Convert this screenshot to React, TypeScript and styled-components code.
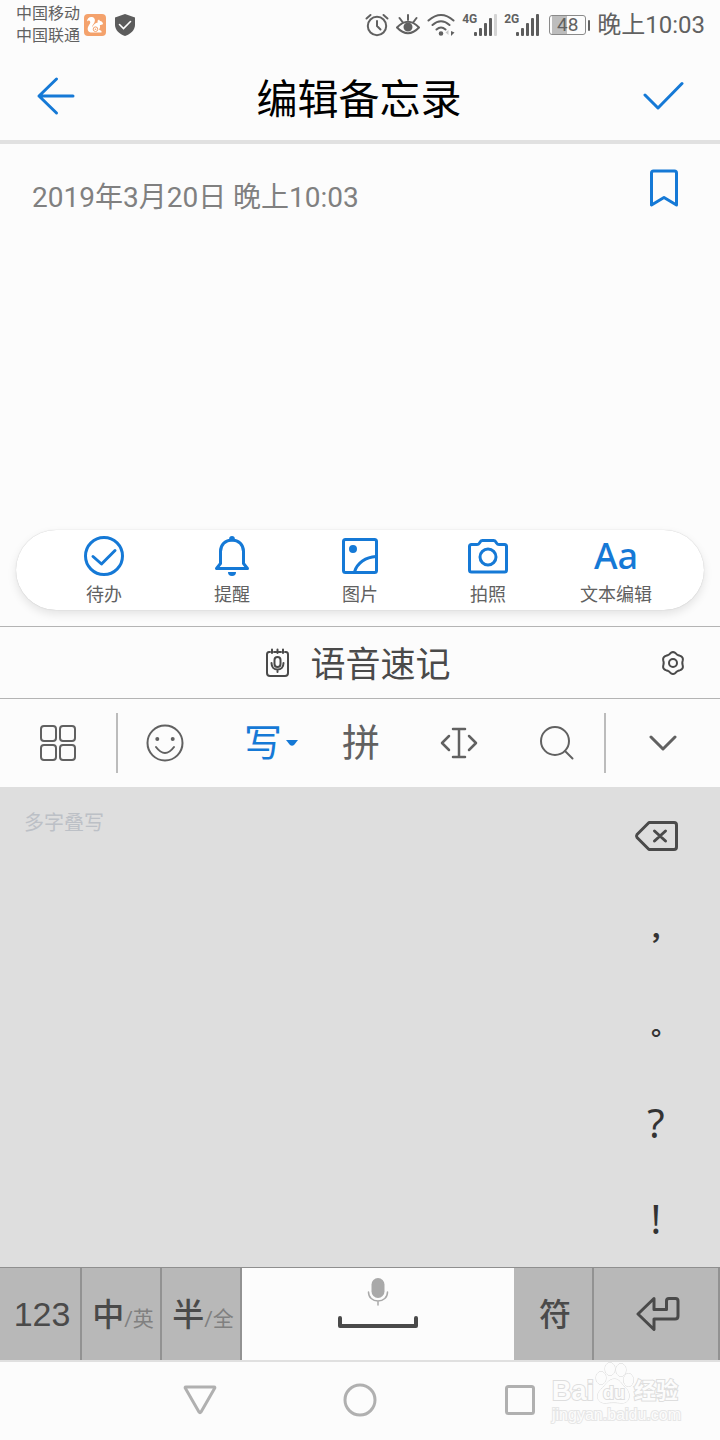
import React from "react";
import styled, { createGlobalStyle } from "styled-components";

const BLUE = "#1579d6";
const GREY = "#616161";
const DARK = "#4a4a4a";

const GlobalStyle = createGlobalStyle`
  *, *::before, *::after { box-sizing: border-box; }
  body {
    margin: 0;
    background: #fcfcfc;
    font-family: Roboto, "Noto Sans CJK SC", sans-serif;
    color: ${GREY};
  }
  button, textarea {
    font: inherit;
    color: inherit;
    border: 0;
    padding: 0;
    margin: 0;
    background: none;
  }
  button { cursor: pointer; }
  svg { display: block; flex: none; }
`;

const Screen = styled.div`
  display: flex;
  flex-direction: column;
  min-height: 100vh;
`;

/* ---------- status bar ---------- */

const StatusBar = styled.div`
  display: flex;
  align-items: center;
  justify-content: space-between;
  height: 50px;
  padding: 0 15px 0 16px;
`;

const StatusGroup = styled.div<{ $gap: number }>`
  display: flex;
  align-items: center;
  gap: ${(p) => p.$gap}px;
`;

const Carriers = styled.div`
  font-size: 16px;
  line-height: 22px;
  margin-right: -5px;
`;

const Signal = styled.div`
  display: flex;
  align-items: flex-start;
  height: 24px;
`;

const Network = styled.span`
  width: 12px;
  font: bold 12px/12px "Liberation Sans Narrow", Roboto, sans-serif;
`;

const Battery = styled.div`
  display: flex;
  align-items: center;
  gap: 2px;
  margin-left: 3px;

  &::after {
    content: "";
    width: 2px;
    height: 11px;
    border-radius: 1px;
    background: ${GREY};
  }
`;

const BatteryCell = styled.span`
  width: 37px;
  height: 20px;
  border: 1px solid #8a8a8a;
  border-radius: 3px;
  font-size: 19px;
  line-height: 18px;
  text-align: center;
  background: linear-gradient(to right, #bdbdbd 48%, transparent 48%) content-box;
  padding: 0 2px;
`;

const Clock = styled.span`
  font-size: 24px;
  line-height: 32px;
`;

/* ---------- header and note ---------- */

const Header = styled.header`
  display: flex;
  align-items: center;
  justify-content: space-between;
  height: 94px;
  padding: 2px 36px 0;
  border-bottom: 4px solid #e1e1e1;
`;

const Title = styled.h1`
  margin: 0;
  padding-top: 8px;
  font-size: 41px;
  line-height: 56px;
  font-weight: 400;
  color: #000;
`;

const Note = styled.main`
  display: flex;
  flex: 1;
  flex-direction: column;
  min-height: 482px;
  padding: 24px 16px 16px;
`;

const NoteMeta = styled.div`
  display: flex;
  align-items: flex-start;
  justify-content: space-between;
  padding: 0 24px 0 16px;
`;

const NoteDate = styled.time`
  padding-top: 12px;
  font-size: 28px;
  line-height: 36px;
  color: #808080;
`;

const NoteText = styled.textarea`
  flex: 1;
  padding: 16px;
  font-size: 28px;
  line-height: 40px;
  resize: none;
  outline: none;
`;

const Tools = styled.nav`
  display: flex;
  height: 80px;
  padding: 0 24px;
  border-radius: 40px;
  background: #fff;
  box-shadow: 0 0 1px rgba(0, 0, 0, 0.24), 0 4px 10px rgba(0, 0, 0, 0.1);
`;

const Tool = styled.button`
  display: flex;
  flex: 1;
  flex-direction: column;
  align-items: center;
  padding-top: 6px;
  font-size: 18px;
  line-height: 24px;
`;

const ToolIcon = styled.span`
  display: flex;
  align-items: center;
  justify-content: center;
  height: 40px;
  margin-bottom: 7px;
  font-family: "Noto Sans", sans-serif;
  font-size: 36px;
  line-height: 40px;
  font-weight: 500;
  color: ${BLUE};
`;

/* ---------- keyboard ---------- */

const VoiceBar = styled.div`
  display: grid;
  grid-template-columns: 1fr auto 1fr;
  align-items: center;
  height: 73px;
  padding: 0 34px;
  border: solid #b4b4b4;
  border-width: 1px 0;
  color: ${DARK};
`;

const VoiceButton = styled.button`
  grid-column: 2;
  display: flex;
  align-items: center;
  gap: 20px;
  padding-right: 4px;
  font-size: 35px;
  line-height: 48px;
`;

const VoiceLabel = styled.span`
  padding-top: 6px;
`;

const SettingsButton = styled.button`
  justify-self: end;
`;

const ModeBar = styled.div`
  display: grid;
  grid-template-columns: 116fr 2px 486fr 2px 114fr;
  align-items: center;
  height: 88px;
`;

const Modes = styled.div`
  display: grid;
  grid-template-columns: repeat(5, 1fr);
  margin: 0 -2px;
`;

const Mode = styled.button<{ $active?: boolean }>`
  display: flex;
  align-items: center;
  justify-content: center;
  height: 60px;
  gap: 4px;
  font-size: 38px;
  color: ${(p) => (p.$active ? BLUE : GREY)};
  padding-left: ${(p) => (p.$active ? 16 : 0)}px;
`;

const ModeLabel = styled.span`
  line-height: 48px;
`;

const Divider = styled.span`
  height: 60px;
  background: #bcbcbc;
`;

const Pad = styled.div`
  display: flex;
  justify-content: space-between;
  height: 480px;
  background: #dedede;
`;

const PadHint = styled.span`
  padding: 21px 24px;
  font-size: 20px;
  line-height: 30px;
  color: #bcc0c6;
`;

const SideKeys = styled.div`
  display: grid;
  grid-template-rows: repeat(5, 1fr);
  width: 128px;
`;

const SideKey = styled.button<{ $mark?: boolean }>`
  display: flex;
  align-items: center;
  justify-content: center;
  padding-top: ${(p) => (p.$mark ? 10 : 0)}px;
  font-family: ${(p) => (p.$mark ? '"Noto Sans CJK TC"' : '"Noto Sans"')}, sans-serif;
  font-size: ${(p) => (p.$mark ? 26 : 40)}px;
  font-weight: ${(p) => (p.$mark ? 700 : 400)};
  line-height: 48px;
  color: #333;
`;

const KeyRow = styled.div`
  display: grid;
  grid-template-columns: 82fr 80fr 80fr 272fr 80fr 126fr;
  height: 93px;
  border-top: 1px solid #8f8f8f;
`;

const Key = styled.button<{ $digits?: boolean }>`
  display: flex;
  align-items: center;
  justify-content: center;
  padding-left: 4px;
  border-right: 2px solid #929292;
  background: #b8b8b8;
  color: ${DARK};
  font-family: ${(p) => (p.$digits ? '"Liberation Sans"' : 'Roboto, "Noto Sans CJK SC"')}, sans-serif;
  font-size: ${(p) => (p.$digits ? 34 : 32)}px;
  font-weight: ${(p) => (p.$digits ? 400 : 500)};
`;

const KeyLabel = styled.span`
  padding-bottom: 4px;
  white-space: nowrap;
`;

const SpaceKey = styled.button`
  display: flex;
  flex-direction: column;
  align-items: center;
  padding-top: 9px;
  gap: 9px;
`;

const KeyAlt = styled.small`
  font-size: 21px;
  font-weight: 400;
  color: #808080;
`;

/* ---------- system navigation ---------- */

const SystemNav = styled.nav`
  position: relative;
  display: flex;
  height: 80px;
  padding: 0 120px 2px;
  border-top: 2px solid #e0e0e0;
`;

const NavButton = styled.button`
  display: flex;
  flex: 1;
  align-items: center;
  justify-content: center;
`;

const Watermark = styled.div`
  position: absolute;
  top: 0;
  right: 40px;
  width: 128px;
  color: #fcfcfc;
  -webkit-text-stroke: 2px #dedede;
  paint-order: stroke fill;
  font-family: "Liberation Sans", "Noto Sans CJK SC", sans-serif;
`;

const WatermarkName = styled.div`
  display: flex;
  align-items: flex-end;
  height: 43px;
  font-size: 27px;
  line-height: 28px;
  font-weight: 700;
`;

const Paw = styled.span`
  position: relative;
  width: 40px;
  height: 43px;
`;

const PawText = styled.span`
  position: absolute;
  left: 9px;
  bottom: 2px;
  font-size: 18px;
  line-height: 20px;
`;

const WatermarkChinese = styled.span`
  font-size: 22px;
  line-height: 28px;
`;

const WatermarkUrl = styled.div`
  font-size: 16px;
  line-height: 20px;
  font-weight: 400;
  -webkit-text-stroke-color: #e6e6e6;
`;

/* ---------- icons ---------- */

type IconProps = {
  w: number;
  h: number;
  stroke?: number;
  color?: string;
  children: React.ReactNode;
};

const Icon = ({ w, h, stroke = 2, color = "currentColor", children }: IconProps) => (
  <svg
    width={w}
    height={h}
    viewBox={`0 0 ${w} ${h}`}
    fill="none"
    stroke={color}
    strokeWidth={stroke}
    strokeLinecap="round"
    strokeLinejoin="round"
    aria-hidden="true"
  >
    {children}
  </svg>
);

const SquirrelIcon = () => (
  <svg width="22" height="22" viewBox="0 0 22 22" aria-hidden="true">
    <rect width="22" height="22" rx="4" fill="#f4a26c" />
    <path
      fill="#fff"
      d="M3 7.500C3 4.500 5.500 2.500 8 3c3 .6 3.600 3.500 2.300 5.700C9.300 10.300 8 11.500 8.300 13.200c1-2.700 3.200-4.200 5.400-4.700l-.2-1.700 1.500-1.300 1 1.500c1.800.2 3 1.500 3 3-.9.900-2 1-3.200 1.100.6 1.700.2 3.200-.8 4.400l2.500 1.500v1.500H6.500C3.500 17.500 3 14.500 4.500 12 5.500 10.300 6.600 9 6.200 7.700 5.700 6.300 4 6.300 3 7.500Z"
    />
    <circle cx="11.500" cy="15.200" r="2.300" fill="none" stroke="#f4a26c" />
    <circle cx="11.500" cy="15.200" r=".8" fill="#f4a26c" />
  </svg>
);

const ShieldIcon = () => (
  <svg width="20" height="22" viewBox="0 0 20 22" aria-hidden="true">
    <path d="M10 0 20 3.500V11c0 5-4.500 9-10 11C4.500 20 0 16 0 11V3.500Z" fill="#5c5c5c" />
    <path d="m4.500 10.500 4 4 7-7" fill="none" stroke="#fff" strokeWidth="1.600" strokeLinecap="round" />
  </svg>
);

const AlarmIcon = () => (
  <Icon w={24} h={24}>
    <circle cx="12" cy="13" r="9.200" />
    <path d="M12 8v5l3.500 3.500M1.500 5.500l4-3.500M22.500 5.500l-4-3.500" />
  </Icon>
);

const EyeIcon = () => (
  <Icon w={24} h={24}>
    <path d="M1 14.500Q12 3 23 14.500 12 26 1 14.500ZM12 2v5M3.500 5l3 4M20.500 5l-3 4" />
    <circle cx="12" cy="14" r="3.500" fill="currentColor" />
  </Icon>
);

const WifiIcon = () => (
  <Icon w={28} h={24} stroke={2}>
    <path d="M1.500 7.500Q14-3.500 26.500 7.500M5.500 12Q14 4.500 22.500 12M9.500 16.500Q14 12.500 18.500 16.500" />
    <circle cx="14" cy="20.500" r="1.300" fill="currentColor" />
    <path d="M21.500 17v5l-3-2.500Z" fill="#c8c8c8" stroke="none" />
    <path d="M24 18v5l3.500-3.500Z" fill="currentColor" stroke="none" />
  </Icon>
);

const Bars = ({ level }: { level: number }) => (
  <svg width="23" height="24" viewBox="0 0 23 24" aria-hidden="true">
    {[4, 8, 13, 18, 22].map((height, i) => (
      <rect
        key={height}
        x={i * 5}
        y={23 - height}
        width="3"
        height={height}
        rx="1"
        fill={i < level ? "#5c5c5c" : "#d4d4d4"}
      />
    ))}
  </svg>
);

const TodoIcon = () => (
  <Icon w={40} h={40} stroke={3}>
    <circle cx="20" cy="20" r="18.500" />
    <path d="m9 20.500 8.500 7.500L31 14.500" />
  </Icon>
);

const BellIcon = () => (
  <Icon w={36} h={40} stroke={3}>
    <path d="M2.500 32.500h31l-4-5V15.500c0-7-5-11.500-11.500-11.500S6.500 8.500 6.500 15.500v12Z" />
    <circle cx="18" cy="2.800" r="1.300" fill="currentColor" />
    <path d="M14 36h8a4 4 0 0 1-8 0Z" fill="currentColor" stroke="none" />
  </Icon>
);

const PictureIcon = () => (
  <Icon w={38} h={40} stroke={3}>
    <rect x="2.500" y="3.500" width="33" height="33" rx="2" />
    <circle cx="12" cy="13" r="2.500" fill="currentColor" />
    <path d="M13.500 36C16 27 25 21 35 20.500" />
  </Icon>
);

const CameraIcon = () => (
  <Icon w={42} h={40} stroke={3}>
    <path d="M4.500 8.500H10q1.500 0 2.500-1.500l1-1.500q.5-1 2-1h11q1.500 0 2 1l1 1.500q1 1.500 2.500 1.500h5.500q2 0 2 2V34q0 2-2 2h-33q-2 0-2-2V10.500q0-2 2-2Z" />
    <circle cx="21" cy="21" r="8" />
  </Icon>
);

const VoiceNoteIcon = () => (
  <Icon w={25} h={30}>
    <path d="M5 4H4Q2 4 2 6.500V25q0 3 3 3h15q3 0 3-3V6.500Q23 4 21 4h-1M7 1.500V5M12.500 1.500V5M18 1.500V5M9 4h2M14 4h2" />
    <rect x="9.500" y="9" width="6" height="10" rx="3" />
    <path d="M6.500 15c0 4 2.500 6.500 6 6.500s6-2.500 6-6.500M12.500 21.500V24" />
  </Icon>
);

const gearOutline = () => {
  const step = Math.PI / 36;
  const points = Array.from({ length: 72 }, (_, i) => {
    const angle = i * step;
    const radius = 10.1 + 0.8 * Math.cos(6 * angle);
    return `${(13 + radius * Math.sin(angle)).toFixed(2)} ${(13 - radius * Math.cos(angle)).toFixed(2)}`;
  });
  return `M${points.join("L")}Z`;
};

const GearIcon = () => (
  <Icon w={26} h={26}>
    <path d={gearOutline()} />
    <circle cx="13" cy="13" r="4" />
  </Icon>
);

const GridIcon = () => (
  <Icon w={38} h={38} stroke={2}>
    {[2, 21].map((y) =>
      [2, 21].map((x) => <rect key={`${x}-${y}`} x={x} y={y} width="15" height="15" rx="3" />)
    )}
  </Icon>
);

const SmileIcon = () => (
  <Icon w={38} h={38}>
    <circle cx="19" cy="19" r="17.500" />
    <path d="M10 23q9 12 18 0" />
    <circle cx="11.300" cy="15" r="1" fill="currentColor" />
    <circle cx="26.700" cy="15" r="1" fill="currentColor" />
  </Icon>
);

const CaretIcon = () => (
  <svg width="12" height="6" viewBox="0 0 12 6" aria-hidden="true">
    <path d="M0 0h12L8 5q-2 1.500-4 0Z" fill={BLUE} />
  </svg>
);

const CursorIcon = () => (
  <Icon w={38} h={34}>
    <path d="M9 10l-7 7 7 7M29 10l7 7-7 7" strokeWidth="2.500" />
    <path d="M13 3h12M13 31h12M19 3v28" strokeWidth="2.500" />
  </Icon>
);

const SearchIcon = () => (
  <Icon w={36} h={36}>
    <circle cx="16" cy="16" r="14" />
    <path d="m26 26 7.500 7.500" />
  </Icon>
);

const ChevronIcon = () => (
  <Icon w={28} h={16} stroke={3}>
    <path d="m2 2 12 12L26 2" />
  </Icon>
);

const BackspaceIcon = () => (
  <Icon w={44} h={32} stroke={3} color={DARK}>
    <path d="M15 3.500h25q2.500 0 2.500 2.500v22q0 2.500-2.500 2.500H15L3 18.500q-1-1.500 0-3ZM20.500 12l11 10M31.500 12l-11 10" />
  </Icon>
);

const EnterIcon = () => (
  <Icon w={44} h={34} stroke={3}>
    <path d="M18 1.500 2 17l16 15.500V22h21q3 0 3-3V4q0-2.500-2.500-2.500h-6.500Q30.500 1.500 30.500 4v8.500H18Z" />
  </Icon>
);

const SpaceIcon = () => (
  <Icon w={80} h={12} stroke={4} color={DARK}>
    <path d="M2 2v8h76V2" />
  </Icon>
);

const MicIcon = () => (
  <Icon w={22} h={30} color="#a9a9a9">
    <rect x="4.500" y="1" width="13" height="20" rx="6.500" fill="#a9a9a9" stroke="none" />
    <path d="M1.500 15c0 5.500 4 9 9.500 9s9.500-3.500 9.500-9M11 24v4" strokeWidth="1.500" />
  </Icon>
);

const TOOLS = [
  { label: "待办", icon: <TodoIcon /> },
  { label: "提醒", icon: <BellIcon /> },
  { label: "图片", icon: <PictureIcon /> },
  { label: "拍照", icon: <CameraIcon /> },
  { label: "文本编辑", icon: "Aa" },
];

export default function App() {
  return (
    <Screen lang="zh-CN">
      <GlobalStyle />
      <StatusBar>
        <StatusGroup $gap={9}>
          <Carriers>
            中国移动
            <br />
            中国联通
          </Carriers>
          <SquirrelIcon />
          <ShieldIcon />
        </StatusGroup>
        <StatusGroup $gap={7}>
          <AlarmIcon />
          <EyeIcon />
          <WifiIcon />
          <Signal>
            <Network>4G</Network>
            <Bars level={4} />
          </Signal>
          <Signal>
            <Network>2G</Network>
            <Bars level={5} />
          </Signal>
          <Battery>
            <BatteryCell>48</BatteryCell>
          </Battery>
          <Clock>晚上10:03</Clock>
        </StatusGroup>
      </StatusBar>

      <Header>
        <button aria-label="返回">
          <Icon w={40} h={40} stroke={3} color={BLUE}>
            <path d="M37 20H3M20.500 3 3 20l17.500 17" />
          </Icon>
        </button>
        <Title>编辑备忘录</Title>
        <button aria-label="完成">
          <Icon w={42} h={30} stroke={3} color={BLUE}>
            <path d="m3 14 13 13L40 2.500" />
          </Icon>
        </button>
      </Header>

      <Note>
        <NoteMeta>
          <NoteDate dateTime="2019-03-20T22:03">2019年3月20日 晚上10:03</NoteDate>
          <button aria-label="收藏">
            <Icon w={32} h={40} stroke={3} color={BLUE}>
              <path d="M3.500 37V5q0-2 2-2h21q2 0 2 2v32L16 29.500Z" />
            </Icon>
          </button>
        </NoteMeta>
        <NoteText aria-label="备忘录内容" />
        <Tools>
          {TOOLS.map((tool) => (
            <Tool key={tool.label}>
              <ToolIcon>{tool.icon}</ToolIcon>
              {tool.label}
            </Tool>
          ))}
        </Tools>
      </Note>

      <VoiceBar>
        <VoiceButton>
          <VoiceNoteIcon />
          <VoiceLabel>语音速记</VoiceLabel>
        </VoiceButton>
        <SettingsButton aria-label="设置">
          <GearIcon />
        </SettingsButton>
      </VoiceBar>

      <ModeBar>
        <Mode aria-label="菜单">
          <GridIcon />
        </Mode>
        <Divider />
        <Modes>
          <Mode aria-label="表情">
            <SmileIcon />
          </Mode>
          <Mode $active>
            <ModeLabel>写</ModeLabel>
            <CaretIcon />
          </Mode>
          <Mode>
            <ModeLabel>拼</ModeLabel>
          </Mode>
          <Mode aria-label="光标">
            <CursorIcon />
          </Mode>
          <Mode aria-label="搜索">
            <SearchIcon />
          </Mode>
        </Modes>
        <Divider />
        <Mode aria-label="收起">
          <ChevronIcon />
        </Mode>
      </ModeBar>

      <Pad>
        <PadHint>多字叠写</PadHint>
        <SideKeys lang="zh-TW">
          <SideKey aria-label="删除">
            <BackspaceIcon />
          </SideKey>
          <SideKey $mark>，</SideKey>
          <SideKey $mark>。</SideKey>
          <SideKey>?</SideKey>
          <SideKey>!</SideKey>
        </SideKeys>
      </Pad>

      <KeyRow>
        <Key $digits>123</Key>
        <Key>
          <KeyLabel>
            中<KeyAlt>/英</KeyAlt>
          </KeyLabel>
        </Key>
        <Key>
          <KeyLabel>
            半<KeyAlt>/全</KeyAlt>
          </KeyLabel>
        </Key>
        <SpaceKey aria-label="空格">
          <MicIcon />
          <SpaceIcon />
        </SpaceKey>
        <Key>
          <KeyLabel>符</KeyLabel>
        </Key>
        <Key aria-label="换行">
          <EnterIcon />
        </Key>
      </KeyRow>

      <SystemNav>
        <NavButton aria-label="后退">
          <Icon w={34} h={30} stroke={3} color="#b0b0b0">
            <path d="M3 2h28q1.500 0 .500 1.500L18 27q-1 1.500-2 0L2.500 3.500Q1.500 2 3 2Z" />
          </Icon>
        </NavButton>
        <NavButton aria-label="主屏幕">
          <Icon w={34} h={34} stroke={3} color="#b0b0b0">
            <circle cx="17" cy="17" r="15" />
          </Icon>
        </NavButton>
        <NavButton aria-label="最近任务">
          <Icon w={30} h={30} stroke={3} color="#b0b0b0">
            <rect x="1.500" y="1.500" width="27" height="27" rx="2" />
          </Icon>
        </NavButton>
        <Watermark>
          <WatermarkName>
            Bai
            <Paw>
              <svg width="40" height="43" viewBox="0 0 40 43" fill="#fcfcfc" stroke="#d8d8d8" aria-hidden="true">
                <ellipse cx="7" cy="16" rx="5" ry="6.500" />
                <ellipse cx="16" cy="7" rx="5" ry="6.500" />
                <ellipse cx="27" cy="8" rx="5" ry="6.500" />
                <ellipse cx="34.500" cy="18" rx="5" ry="6.500" />
                <path d="M20.500 17c5 0 7 5 10 8 7 5 6 16-2 16-4 0-8-1-16 0-9 1-12-8-5-14 4-4 7-10 13-10Z" />
              </svg>
              <PawText>du</PawText>
            </Paw>
            <WatermarkChinese>经验</WatermarkChinese>
          </WatermarkName>
          <WatermarkUrl>jingyan.baidu.com</WatermarkUrl>
        </Watermark>
      </SystemNav>
    </Screen>
  );
}
